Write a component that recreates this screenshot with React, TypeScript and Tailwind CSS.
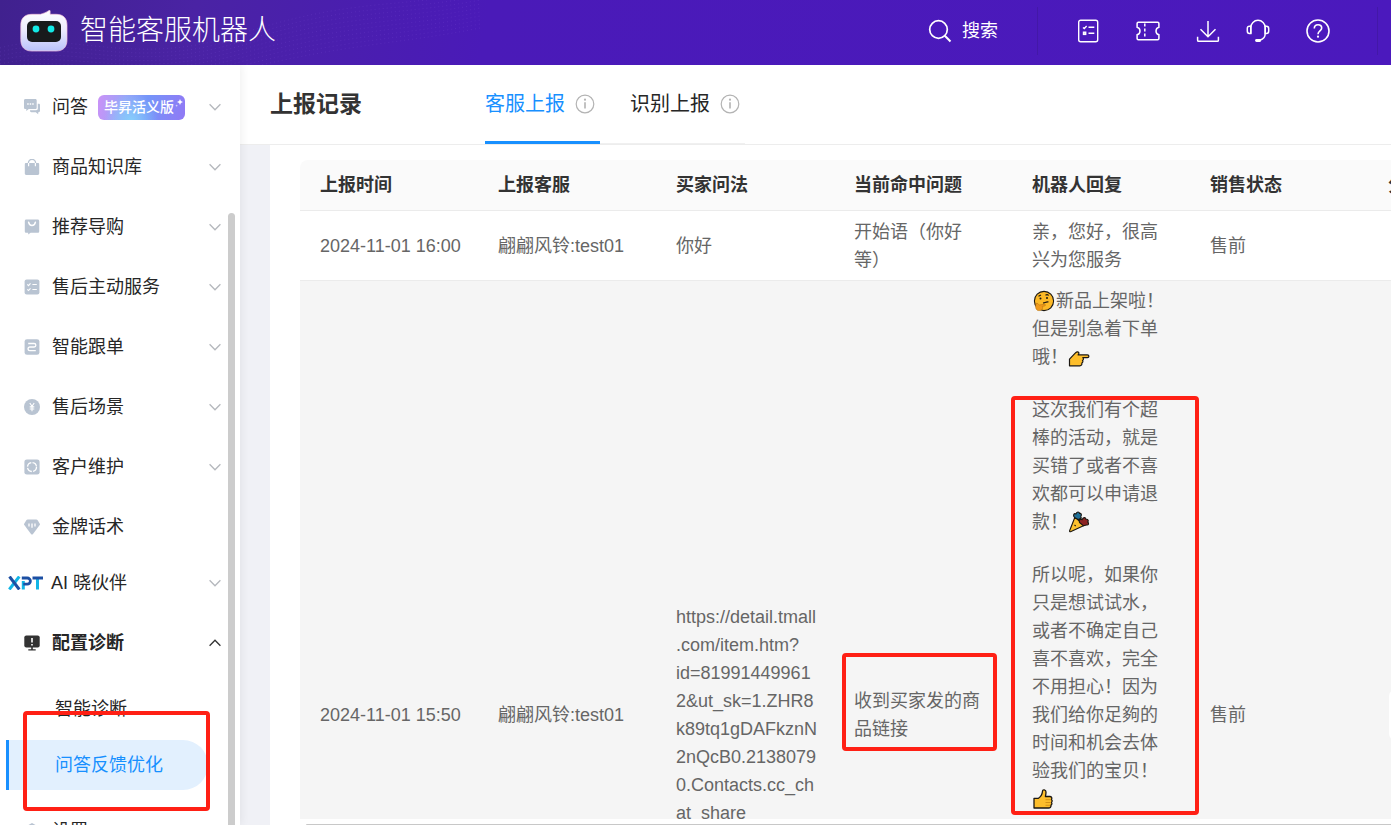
import type { ReactNode } from "react";

const ChevronDown = () => (
    <svg className="w-3 h-3 text-[#b5b8bd]" viewBox="0 0 12 12" fill="none" stroke="currentColor" strokeWidth="1.3">
        <path d="M.6 3.2 6 8.8l5.4-5.6" />
    </svg>
);

const ChevronUp = () => (
    <svg className="w-3 h-3 text-[#333]" viewBox="0 0 12 12" fill="none" stroke="currentColor" strokeWidth="1.3">
        <path d="M.6 8.8 6 3.2l5.4 5.6" />
    </svg>
);

const InfoIcon = () => (
    <svg className="w-5 h-5 text-[#b3b3b3]" viewBox="0 0 20 20" fill="none" stroke="currentColor" strokeWidth="1.2">
        <circle cx="10" cy="10" r="8.8" />
        <path d="M10 8.2v6.4" strokeWidth="1.6" />
        <circle cx="10" cy="5.7" r="1.1" fill="currentColor" stroke="none" />
    </svg>
);

const MenuIcon = ({ children }: { children: ReactNode }) => (
    <svg className="w-4 h-4 shrink-0" viewBox="0 0 16 16" fill="#b9c4d2">
        {children}
    </svg>
);

const icons = {
    chat: (
        <MenuIcon>
            <path d="M13.800 4.800h.8c.9 0 1.400.5 1.400 1.400v5.600c0 .9-.5 1.400-1.400 1.400h-.4v2l-2.400-2H7.400c-.9 0-1.400-.5-1.400-1.400v-.6h6.200c1 0 1.600-.6 1.600-1.600z" />
            <path d="M1.600 0h9.600c1 0 1.500.5 1.500 1.500v7c0 1-.5 1.500-1.500 1.500H4.800L2.300 12v-2h-.7C.5 10 0 9.500 0 8.500v-7C0 .5.500 0 1.600 0z" />
            <path d="M3.200 4.300h1.500v1.500H3.200zM5.700 4.300h1.500v1.500H5.700zM8.200 4.300h1.500v1.500H8.200z" fill="#fff" />
        </MenuIcon>
    ),
    bag: (
        <MenuIcon>
            <path d="M4.400 6V3.900a3.600 3.600 0 0 1 7.200 0V6" fill="none" stroke="#b9c4d2" strokeWidth="1.3" />
            <path d="M2.200 4h11.600c.9 0 1.400.5 1.400 1.400v9.200c0 .9-.5 1.400-1.400 1.400H2.200c-.9 0-1.400-.5-1.400-1.400V5.400C.8 4.500 1.300 4 2.200 4z" />
            <path d="M4.600 4v3.300M11.400 4v3.300" stroke="#fff" strokeWidth="1.2" />
        </MenuIcon>
    ),
    guide: (
        <MenuIcon>
            <path d="M2.400.6h11.200c1.100 0 1.600.5 1.600 1.600v10c0 1.100-.5 1.600-1.600 1.600H6.600L4.200 15.600v-1.800H2.400c-1.100 0-1.600-.5-1.600-1.600v-10C.8 1.100 1.300.6 2.400.6z" />
            <path d="M4.600 3.200a3.500 4.400 0 0 0 6.800 0" fill="none" stroke="#fff" strokeWidth="1.5" strokeLinecap="round" />
        </MenuIcon>
    ),
    list: (
        <MenuIcon>
            <rect x=".6" y=".6" width="14.8" height="14.8" rx="2" />
            <path d="m3.300 5.400 1.200 1.200 2-2.200M8.400 5.500h4.400M3.300 10.300l1.200 1.200 2-2.200M8.400 10.500h4.400" fill="none" stroke="#fff" strokeWidth="1.1" />
        </MenuIcon>
    ),
    follow: (
        <MenuIcon>
            <rect x=".6" y=".2" width="14.8" height="15.6" rx="2.4" />
            <path d="M4.200 4.500h5.900a1.700 1.700 0 0 1 0 3.500H5.900a1.800 1.800 0 0 0 0 3.700h5.900" fill="none" stroke="#fff" strokeWidth="1.3" />
        </MenuIcon>
    ),
    yen: (
        <MenuIcon>
            <circle cx="8" cy="8" r="8" />
            <path d="M5.800 4 8 7.200 10.200 4M8 7v5.200M5.700 7.900h4.600M5.700 10h4.600" fill="none" stroke="#fff" strokeWidth="1.1" />
        </MenuIcon>
    ),
    care: (
        <MenuIcon>
            <rect x=".4" y=".4" width="15.2" height="15.2" rx="2.4" />
            <circle cx="8" cy="8" r="4.5" fill="none" stroke="#fff" strokeWidth="1.3" strokeDasharray="5.8 1.27" />
        </MenuIcon>
    ),
    gem: (
        <MenuIcon>
            <path d="M3.600.5h8.800c.5 0 .8.200 1.100.6l2.300 3.700c.3.500.2.900-.1 1.300L9 14.900c-.7.800-1.300.8-2 0L.3 6.100c-.3-.4-.4-.8-.1-1.300L2.500 1.100c.3-.4.600-.6 1.100-.6z" />
            <path d="M5 4.600v2.900M8 4.400v4.300M11 4.600v2.900" stroke="#fff" strokeWidth="1.3" />
        </MenuIcon>
    ),
    diagnose: (
        <svg className="w-4 h-4 shrink-0" viewBox="0 0 16 16" fill="#333">
            <rect x=".3" y=".6" width="15.4" height="12" rx="2" />
            <path d="M7.200 12h1.600v2.300h2.900v1.300H4.300v-1.300h2.900z" />
            <path d="M7.200 2.900h1.600v4.700H7.200zM7.200 8.900h1.600v1.500H7.200z" fill="#fff" />
        </svg>
    ),
    gear: (
        <MenuIcon>
            <path d="M8 0l7 4v8l-7 4-7-4V4z" />
            <circle cx="8" cy="8" r="2.5" fill="#fff" />
        </MenuIcon>
    ),
};

const menu = [
    { label: "问答", icon: icons.chat, badge: true, arrow: true },
    { label: "商品知识库", icon: icons.bag, arrow: true },
    { label: "推荐导购", icon: icons.guide, arrow: true },
    { label: "售后主动服务", icon: icons.list, arrow: true },
    { label: "智能跟单", icon: icons.follow, arrow: true },
    { label: "售后场景", icon: icons.yen, arrow: true },
    { label: "客户维护", icon: icons.care, arrow: true },
    { label: "金牌话术", icon: icons.gem, arrow: false },
];

const Badge = () => (
    <span className="relative h-[25px] w-[87px] rounded-md bg-[radial-gradient(circle_at_38%_100%,#86cdfb_0%,transparent_45%),linear-gradient(100deg,#cb92f7_0%,#9aa4f8_30%,#7495f9_55%,#9179f5_100%)] pl-1.5 text-left text-sm leading-[25px] font-medium text-white whitespace-nowrap">
        毕昇活义版
        <svg className="absolute top-1 right-0.5 w-2 h-2" viewBox="0 0 8 8" fill="#fff">
            <path d="M5 0l.9 2.100L8 3l-2.100.9L5 6l-.9-2.100L2 3l2.100-.9z" />
            <circle cx="1.6" cy="6.6" r=".9" opacity=".6" />
        </svg>
    </span>
);

const RobotLogo = () => (
    <svg className="w-12 h-[42px]" viewBox="0 0 48 42">
        <defs>
            <linearGradient id="face" x1="0" y1="0" x2="0" y2="1">
                <stop offset="0" stopColor="#fff" />
                <stop offset=".5" stopColor="#eceafd" />
                <stop offset="1" stopColor="#b9c2fb" />
            </linearGradient>
        </defs>
        <path d="M12 4.300h8.500C23 3.500 26 2.600 29.200.4c.5-.3.900 0 .9.600v3.300H36c7.500 0 11 4 11 11v14.200c0 7.500-3.500 11.500-11 11.500H12C4.500 41 .8 37 .8 29.500V15.300c0-7 3.700-11 11.200-11z" fill="url(#face)" stroke="#f7c6df" strokeWidth=".7" />
        <rect x="7" y="11" width="34" height="21" rx="5" fill="#181a1c" />
        <circle cx="16" cy="19" r="3.4" fill="#13e8e6" />
        <circle cx="31" cy="19" r="3.4" fill="#13e8e6" />
    </svg>
);

const Header = () => (
    <header className="relative flex h-[65px] shrink-0 items-center bg-[linear-gradient(100deg,#40218e_0%,#4a23a4_14%,#4a1ab8_35%,#4b19bd_100%)] pr-[13px] pb-1 pl-5 text-white">
        <svg className="absolute inset-y-0 left-0 h-full w-[480px] opacity-20" viewBox="0 0 480 65" fill="none" stroke="#8a5be0" strokeWidth="1" strokeDasharray="1 3">
            {[0, 1, 2, 3, 4, 5, 6, 7, 8, 9].map((i) => (
                <path key={i} d={`M0 ${48 + i * 4}C70 ${28 + i * 5} 130 ${70 + i * 3} 240 ${34 + i * 4}S400 ${8 + i * 4} 480 ${i * 4 - 8}`} />
            ))}
        </svg>
        <a href="#" className="relative flex items-center gap-3">
            <RobotLogo />
            <span className="text-[28px] leading-8 font-light whitespace-nowrap">智能客服机器人</span>
        </a>
        <div className="relative ml-auto flex h-12 items-center">
            <button className="flex items-center gap-2.5 pr-[39px]">
                <svg className="w-6 h-6" viewBox="0 0 24 24" fill="none" stroke="currentColor" strokeWidth="1.7">
                    <circle cx="10.5" cy="10.5" r="8.8" />
                    <path d="m16.800 16.800 5.700 5.700" strokeWidth="2" />
                </svg>
                <span className="text-lg leading-6">搜索</span>
            </button>
            <div className="flex h-12 items-center border-x border-[#4318a8] pr-[47px] pl-[38px]">
                <button aria-label="任务清单" className="mr-9">
                    <svg className="w-6 h-6" viewBox="0 0 24 24" fill="none" stroke="currentColor" strokeWidth="1.4">
                        <rect x="2.7" y="1.2" width="19" height="21.6" rx="2" />
                        <path d="m7 8.400 1.300 1.200L10.600 7M12.500 8.300h5.800M12.500 14.300h5.800" />
                        <rect x="7.500" y="13.2" width="2.2" height="2.2" />
                    </svg>
                </button>
                <button aria-label="优惠券" className="mr-9">
                    <svg className="w-6 h-6" viewBox="0 0 24 24" fill="none" stroke="currentColor" strokeWidth="1.5">
                        <path d="M2.300 3.300h19.400c.8 0 1.200.4 1.200 1.200v3.700c-1.800.5-2.900 1.800-2.900 3.800s1.100 3.300 2.900 3.800v3.700c0 .8-.4 1.200-1.200 1.200H2.300c-.8 0-1.200-.4-1.200-1.200v-3.700C2.900 15.300 4 14 4 12S2.900 8.700 1.100 8.200V4.500c0-.8.4-1.200 1.200-1.200z" />
                        <path d="M8.800 4.500v15" strokeDasharray="3 2" />
                    </svg>
                </button>
                <button aria-label="下载" className="mr-[26px]">
                    <svg className="w-6 h-6" viewBox="0 0 24 24" fill="none" stroke="currentColor" strokeWidth="1.5">
                        <path d="M12 2v15.500M4.500 10.300l7.500 7.400 7.500-7.400M1.600 17.800v3.400c0 .8.300 1.100 1.100 1.100h18.600c.8 0 1.100-.3 1.100-1.100v-3.400" />
                    </svg>
                </button>
                <button aria-label="在线客服" className="mr-9">
                    <svg className="w-6 h-6" viewBox="0 0 24 24" fill="none" stroke="currentColor" strokeWidth="1.5">
                        <path d="M4.800 14.700V8.500a7.200 7.200 0 0 1 14.400 0v6c0 3.500-2 5.800-5.200 6.400" />
                        <path d="M4.800 7.200H3.500C2 7.200 1.300 8 1.300 9.500V12c0 1.600.7 2.500 2.200 2.500h1.300zM19.200 7.200h1.300c1.500 0 2.200.8 2.200 2.300V12c0 1.600-.7 2.500-2.200 2.500h-1.300z" />
                        <path d="M10.500 21.500h3.300" strokeWidth="2.800" strokeLinecap="round" />
                    </svg>
                </button>
                <button aria-label="帮助">
                    <svg className="w-6 h-6" viewBox="0 0 24 24" fill="none" stroke="currentColor" strokeWidth="1.6">
                        <circle cx="12" cy="12" r="11" />
                        <path d="M8.300 9.500C8.300 7 9.800 5.700 12 5.700s3.700 1.400 3.700 3.400c0 2.800-3.700 2.900-3.700 6.100" />
                        <circle cx="12" cy="17.7" r="1.1" fill="currentColor" stroke="none" />
                    </svg>
                </button>
            </div>
        </div>
    </header>
);

const Sidebar = () => (
    <aside className="relative z-10 w-60 shrink-0 overflow-hidden bg-white pt-3 shadow-[2px_0_8px_rgba(0,0,0,0.06)]">
        <nav className="text-lg text-[#262626]">
            {menu.map((item) => (
                <button key={item.label} className="flex h-[60px] w-full items-center gap-3 pr-[19px] pl-6">
                    {item.icon}
                    <span className="flex items-center gap-2.5">
                        {item.label}
                        {item.badge && <Badge />}
                    </span>
                    {item.arrow && <span className="ml-auto"><ChevronDown /></span>}
                </button>
            ))}
            <button className="mb-1 flex h-[52px] w-full items-center gap-2 pr-[19px] pl-2">
                <svg className="w-[35px] h-[14px]" viewBox="0 0 35 14" fill="none" strokeWidth="3">
                    <path d="M11.300.5 1.300 13.500" stroke="#12b5e6" />
                    <path d="m1.500.5 9.800 13" stroke="#1c4fa3" />
                    <path d="M15.300 13.500V5" stroke="#12b5e6" />
                    <path d="M13.800 2h5.500a3.100 3.100 0 0 1 0 6.200h-4" stroke="#1c4fa3" strokeWidth="2.8" />
                    <path d="M29.500 2v11.500" stroke="#12b5e6" />
                    <path d="M24.500 2H35" stroke="#1c4fa3" />
                </svg>
                <span>AI 晓伙伴</span>
                <span className="ml-auto"><ChevronDown /></span>
            </button>
            <button className="flex h-[60px] w-full items-center gap-3 pr-[19px] pl-6 font-bold">
                {icons.diagnose}
                <span>配置诊断</span>
                <span className="ml-auto"><ChevronUp /></span>
            </button>
            <div className="flex flex-col gap-1.5 py-[11px] pr-8 pl-1.5">
                <a href="#" className="h-[50px] border-l-[3px] border-transparent pl-[46px] leading-[50px]">智能诊断</a>
                <a href="#" className="h-[50px] rounded-r-full border-l-[3px] border-[#1890ff] bg-[#e2f0fe] pl-[46px] leading-[50px] text-[#1890ff]">问答反馈优化</a>
            </div>
            <button className="flex h-[60px] w-full items-center gap-3 pr-[19px] pl-6">
                {icons.gear}
                <span>设置</span>
            </button>
        </nav>
        {/* scroll thumb */}
        <div className="absolute top-[148px] right-[5px] bottom-0 w-[7px] rounded-t-full bg-[#ccc]" />
    </aside>
);

const Thinking = () => (
    <svg className="mx-px inline-block w-[22px] h-[22px] align-[-5px]" viewBox="0 0 22 22" stroke="#1b1712" strokeWidth="1.1" strokeLinejoin="round">
        <circle cx="11" cy="11" r="9.6" fill="#fcb927" />
        <circle cx="7.5" cy="8.5" r="1" fill="#1b1712" stroke="none" />
        <circle cx="14" cy="8" r="1" fill="#1b1712" stroke="none" />
        <path d="M5.500 6.200 8 5M12.500 5.200c1-.8 2.300-.7 3.200.3M10 13c2-.2 3.200-1.500 5.500-1" fill="none" />
        <path d="M3 13.500c1.800-1 2.200 1 3.300 1.500l5.200-.7c1.300 0 1.200 1.400.2 1.600l-2.500.5c1.200 1.700-.4 4.300-3.400 4.200C3 20.500 2 17.500 3 13.500z" fill="#f0991b" stroke="#b8730f" strokeWidth=".6" />
    </svg>
);

const PointRight = () => (
    <svg className="inline-block w-[22px] h-[22px] align-[-7px]" viewBox="0 0 22 22" stroke="#1b1712" strokeWidth="1.2" strokeLinejoin="round">
        <path d="M1.500 11.200 7.700 4.600c1-1 3-1 3.200.2.100.7-.3 1.400-.8 2.100h9.300c2 0 2 2.800 0 2.800h-4.600c1 1 .7 2.300-.3 2.700.8 1 .3 2.200-.7 2.600.5 1.500-.4 2.800-2 2.800H1.500z" fill="#fdbe2c" />
    </svg>
);

const Party = () => (
    <svg className="inline-block w-[22px] h-[22px] align-[-5px]" viewBox="0 0 22 22" stroke="#1b1712" strokeWidth="1.1" strokeLinejoin="round">
        <path d="M7 6 1.600 19.800c-.2.700.3 1.100.9.900L16 14.500z" fill="#fdc12d" />
        <path d="M6.500 6.500c-2-2.500-.5-4.500 1.500-3.500.5-2.500 3.500-2.500 3.500-.5 1.700-.5 2.600 1.300 1.300 2.700 1 2-.6 3.800-2.100 3.600z" fill="#1f6f96" />
        <path d="M11.500 11.500c-.7-2.500.8-4 2.700-2.800.7-2.700 3.300-2.700 3.800-.4 2.200-.3 3 1.700 1.600 2.700 1.800 1.200 1 3.300-1 3L15.500 14.800z" fill="#8c2422" />
        <path d="m10.500 8.500 3-1.500M6.500 14l1.200 1" fill="none" />
    </svg>
);

const ThumbsUp = () => (
    <svg className="inline-block w-[22px] h-[22px] align-[-5px]" viewBox="0 0 22 22" stroke="#1b1712" strokeWidth="1.3" strokeLinejoin="round">
        <path d="M2 10.300h4.500c2.500-1.600 3.700-3.900 4-7C10.700 1 14 1.400 14 4c0 1.600-.2 3-.6 4.500h4.300c2 0 2.700 1.600 1.700 2.900 1 .9 1 2.100.1 2.900.7 1 .4 2.200-.5 2.800.2 1.800-.8 2.900-2.500 2.900H2z" fill="#fdbe2c" />
        <path d="M13.500 11.700h5M13.500 14.500h5M13.500 17.300h4.500" stroke="#c98612" strokeWidth=".8" />
    </svg>
);

const columns = ["上报时间", "上报客服", "买家问法", "当前命中问题", "机器人回复", "销售状态", "分析状态"];

const ReportTable = () => (
    <table className="w-[1246px] table-fixed border-separate border-spacing-0 text-left text-lg leading-7 text-[#666]">
        <thead>
            <tr className="bg-[#fafafa] text-[#333]">
                {columns.map((name) => (
                    <th key={name} className="h-[51px] border-b border-[#ebebeb] px-5 font-bold whitespace-nowrap first:rounded-tl-lg">{name}</th>
                ))}
            </tr>
        </thead>
        <tbody>
            <tr>
                <td className="h-[70px] border-b border-[#ebebeb] pl-5 whitespace-nowrap">2024-11-01 16:00</td>
                <td className="border-b border-[#ebebeb] pl-5 whitespace-nowrap">翩翩风铃:test01</td>
                <td className="border-b border-[#ebebeb] pl-5">你好</td>
                <td className="border-b border-[#ebebeb] py-1.5 pl-5">开始语（你好<br />等）</td>
                <td className="border-b border-[#ebebeb] py-1.5 pl-5">亲，您好，很高<br />兴为您服务</td>
                <td className="border-b border-[#ebebeb] pl-5">售前</td>
                <td className="border-b border-[#ebebeb] pl-5" />
            </tr>
            <tr className="bg-[#f5f5f5]">
                <td className="h-[867px] pl-5 whitespace-nowrap">2024-11-01 15:50</td>
                <td className="pl-5 whitespace-nowrap">翩翩风铃:test01</td>
                <td className="pl-5 whitespace-nowrap">
                    https://detail.tmall<br />.com/item.htm?<br />id=81991449961<br />2&amp;ut_sk=1.ZHR8<br />
                    k89tq1gDAFkznN<br />2nQcB0.2138079<br />0.Contacts.cc_ch<br />at_share
                </td>
                <td className="pl-5 whitespace-nowrap">收到买家发的商<br />品链接</td>
                <td className="py-1.5 pl-5 align-top whitespace-nowrap">
                    <p><Thinking />新品上架啦！<br />但是别急着下单<br />哦！<PointRight /></p>
                    <p className="mt-[25px]">这次我们有个超<br />棒的活动，就是<br />买错了或者不喜<br />欢都可以申请退<br />款！<Party /></p>
                    <p className="mt-[25px]">
                        所以呢，如果你<br />只是想试试水，<br />或者不确定自己<br />喜不喜欢，完全<br />不用担心！因为<br />
                        我们给你足夠的<br />时间和机会去体<br />验我们的宝贝！<br /><ThumbsUp />
                    </p>
                </td>
                <td className="pl-5">售前</td>
                <td className="pl-[21px]">
                    <button aria-label="操作" className="block h-[50px] w-24 rounded-md bg-white" />
                </td>
            </tr>
        </tbody>
    </table>
);

export default function App() {
    return (
        <div className="relative flex h-screen flex-col overflow-hidden bg-[#f0f1f6] font-['Liberation_Sans','Noto_Sans_CJK_SC',sans-serif]">
            <Header />
            <div className="flex min-h-0 flex-1">
                <Sidebar />
                <main className="flex min-w-0 flex-1 flex-col">
                    <div className="flex h-20 shrink-0 border-b border-[#ededed] bg-white pl-[30px]">
                        <h1 className="w-[215px] text-[23px] leading-[78px] font-bold text-[#333]">上报记录</h1>
                        <div role="tablist" className="flex text-xl text-[#262626]">
                            <button role="tab" aria-selected="true" className="flex w-[115px] items-center gap-2.5 border-b-[3px] border-[#1890ff] pt-0.5 whitespace-nowrap text-[#1890ff]">
                                客服上报<InfoIcon />
                            </button>
                            <button role="tab" aria-selected="false" className="flex w-[145px] items-center gap-2.5 border-b border-[#f0f0f0] pl-[30px] whitespace-nowrap">
                                识别上报<InfoIcon />
                            </button>
                        </div>
                    </div>
                    <div className="ml-[30px] flex min-h-0 flex-1 flex-col bg-white pt-[15px] pl-[30px]">
                        <div className="min-h-0 flex-1 overflow-hidden">
                            <ReportTable />
                        </div>
                        <div className="mt-[5px] ml-1.5 h-px shrink-0 rounded-tl-full bg-[#c8c8c8]" />
                    </div>
                </main>
            </div>
            {/* red markers over the menu entry and the two cells */}
            <div className="pointer-events-none absolute top-[711px] left-[23px] z-20 h-[100px] w-[187px] rounded border-4 border-[#ff2015]" />
            <div className="pointer-events-none absolute top-[653px] left-[842px] z-20 h-[98px] w-[155px] rounded border-4 border-[#ff2015]" />
            <div className="pointer-events-none absolute top-[396px] left-[1011px] z-20 h-[419px] w-[188px] rounded border-4 border-[#ff2015]" />
        </div>
    );
}
